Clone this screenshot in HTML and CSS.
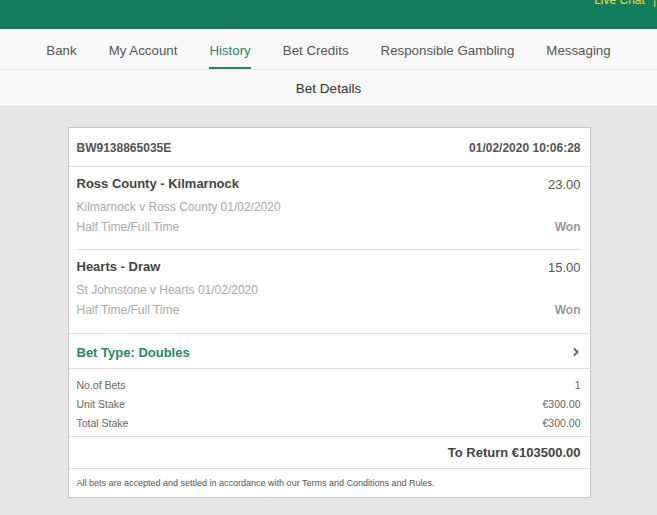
FILE: index.html
```html
<!DOCTYPE html>
<html lang="en">
<head>
    <meta charset="UTF-8">
    <meta name="viewport" content="width=device-width, initial-scale=1.0">
    <title>Bet Details</title>
    <link rel="stylesheet" href="styles.css">
</head>
<body>

    <!-- Top green strip -->
    <div class="top-bar">
        <span class="live-chat">Live Chat</span>
        <span class="pipe">|</span>
    </div>

    <!-- Account navigation -->
    <nav class="account-nav">
        <a class="nav-item">Bank</a>
        <a class="nav-item">My Account</a>
        <a class="nav-item active">History</a>
        <a class="nav-item">Bet Credits</a>
        <a class="nav-item">Responsible Gambling</a>
        <a class="nav-item">Messaging</a>
    </nav>

    <div class="page-title">Bet Details</div>

    <div class="content">
        <div class="bet-card">
            <div class="bet-header">
                <span>BW9138865035E</span>
                <span>01/02/2020 10:06:28</span>
            </div>

            <div class="selections">
                <div class="selection">
                    <div class="sel-line">
                        <span class="sel-name">Ross County - Kilmarnock</span>
                        <span class="sel-odds">23.00</span>
                    </div>
                    <div class="sel-sub">Kilmarnock v Ross County 01/02/2020</div>
                    <div class="sel-line sel-sub">
                        <span>Half Time/Full Time</span>
                        <span class="sel-result">Won</span>
                    </div>
                </div>
                <div class="selection">
                    <div class="sel-line">
                        <span class="sel-name">Hearts - Draw</span>
                        <span class="sel-odds">15.00</span>
                    </div>
                    <div class="sel-sub">St Johnstone v Hearts 01/02/2020</div>
                    <div class="sel-line sel-sub">
                        <span>Half Time/Full Time</span>
                        <span class="sel-result">Won</span>
                    </div>
                </div>
            </div>

            <div class="bet-type">
                <span>Bet Type: Doubles</span>
                <svg class="chevron" width="8" height="10" viewBox="0 0 8 10">
                    <polyline points="2,1.5 5.5,5 2,8.5" fill="none" stroke="#666" stroke-width="2"/>
                </svg>
            </div>

            <div class="stakes">
                <div class="stake-row"><span>No.of Bets</span><span>1</span></div>
                <div class="stake-row"><span>Unit Stake</span><span>€300.00</span></div>
                <div class="stake-row"><span>Total Stake</span><span>€300.00</span></div>
            </div>

            <div class="to-return">To Return €103500.00</div>

            <div class="terms">All bets are accepted and settled in accordance with our Terms and Conditions and Rules.</div>
        </div>
    </div>

</body>
</html>
```

FILE: styles.css
```css
body {
    margin: 0;
    padding: 0;
    font-family: 'Liberation Sans', Arial, sans-serif;
    background-color: #e6e6e6;
    color: #444;
}

.top-bar {
    height: 29px;
    background-color: #137e5e; /* brand green */
    display: flex;
    justify-content: flex-end;
    align-items: flex-start;
    overflow: hidden;
    font-size: 12px;
    line-height: 12px;
}

.live-chat {
    color: #e8dc4c;
    margin-top: -6px;
}

.pipe {
    color: #e8dc4c;
    margin: -6px 1px 0 8px;
}

.account-nav {
    height: 40px;
    background-color: #f8f8f8;
    display: flex;
    justify-content: center;
    gap: 32px;
    border-bottom: 1px solid #e2e2e2;
}

.nav-item {
    font-size: 13.3px;
    color: #555;
    line-height: 40px;
    height: 36px;
    padding-top: 2px;
    border-bottom: 2px solid transparent;
}

.nav-item.active {
    color: #1f8a69;
    border-bottom-color: #1f8a69;
}

.page-title {
    height: 36px;
    line-height: 38px;
    text-align: center;
    font-size: 13.5px;
    color: #333;
    background-color: #f8f8f8;
    border-bottom: 1px solid #dadada;
}

.content {
    padding: 20px 0 20px 1px;
}

.bet-card {
    width: 521px;
    margin: 0 auto;
    background-color: #fff;
    border: 1px solid #c6c6c6;
}

.bet-header {
    display: flex;
    justify-content: space-between;
    align-items: center;
    height: 37px;
    padding: 1px 9px 0 8px;
    font-size: 12px;
    font-weight: bold;
    color: #555;
    border-bottom: 1px solid #e0e0e0;
}

.selections {
    padding: 0 9px 0 8px;
    border-bottom: 1px solid #e0e0e0;
}

.selection {
    padding: 7px 0 12px;
}

.selection + .selection {
    border-top: 1px solid #e0e0e0;
    padding-top: 7px;
    padding-bottom: 13px;
}

.sel-line {
    display: flex;
    justify-content: space-between;
    align-items: center;
}

.sel-name {
    font-size: 13px;
    font-weight: bold;
    color: #444;
    line-height: 20px;
}

.sel-odds {
    font-size: 13px;
    color: #555;
}

.sel-sub {
    font-size: 12px;
    line-height: 20px;
    color: #a9a9a9;
}

.selection > .sel-sub:nth-child(2) {
    margin-top: 3px;
}

.sel-result {
    font-weight: bold;
    color: #999;
}

.bet-type {
    display: flex;
    justify-content: space-between;
    align-items: center;
    height: 32px;
    padding: 2px 10px 0 8px;
    font-size: 13px;
    font-weight: bold;
    color: #1f8a69;
    border-bottom: 1px solid #e0e0e0;
}

.stakes {
    padding: 7px 9px 3px 8px;
    border-bottom: 1px solid #e0e0e0;
}

.stake-row {
    display: flex;
    justify-content: space-between;
    font-size: 10.5px;
    line-height: 19px;
    color: #666;
}

.to-return {
    height: 31px;
    line-height: 32px;
    text-align: right;
    padding-right: 9px;
    font-size: 13px;
    font-weight: bold;
    color: #444;
    border-bottom: 1px solid #e0e0e0;
}

.terms {
    height: 28px;
    line-height: 29px;
    padding-left: 8px;
    font-size: 9px;
    color: #555;
}
```
